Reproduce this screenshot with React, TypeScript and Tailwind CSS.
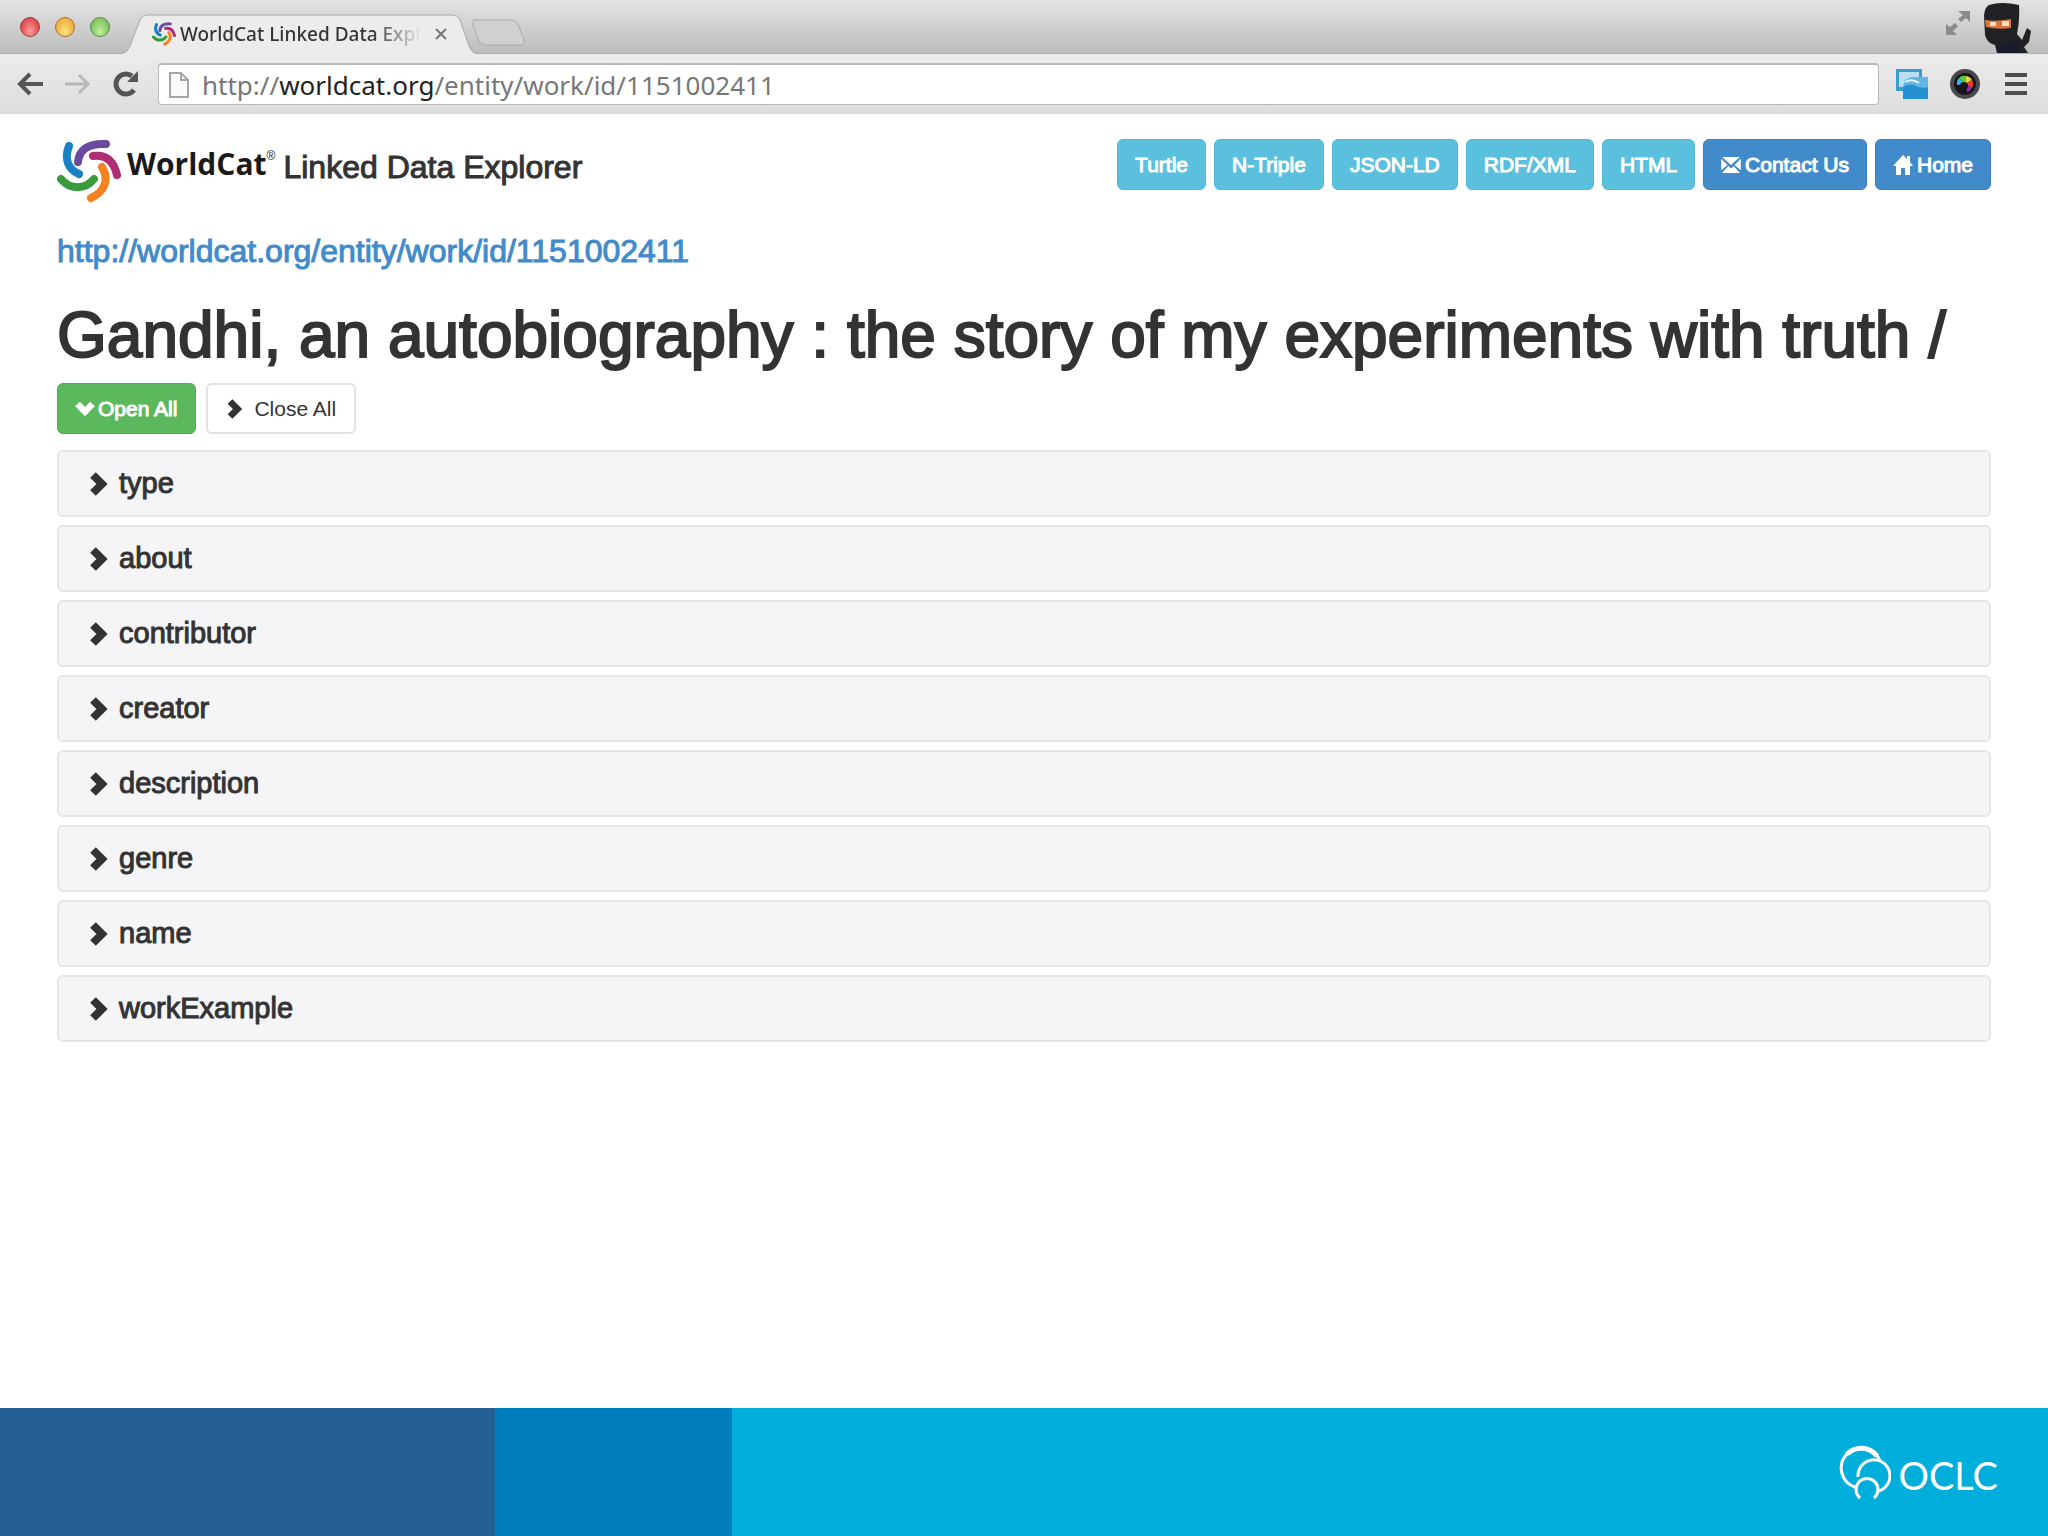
import type { ReactNode } from 'react'

const FORMATS = ['Turtle', 'N-Triple', 'JSON-LD', 'RDF/XML', 'HTML']

const PROPERTIES = [
    'type',
    'about',
    'contributor',
    'creator',
    'description',
    'genre',
    'name',
    'workExample',
]

const ENTITY_URL = 'http://worldcat.org/entity/work/id/1151002411'

function Swirl({ className }: { className: string }) {
    return (
        <svg viewBox="0 0 64 64" className={className} fill="none" strokeWidth="8" strokeLinecap="round" aria-hidden="true">
            <path d="M12 7C7 20 11 30 22 35" stroke="#1a80c4" />
            <path d="M21 23C22 11 31 4 49 5" stroke="#6a4a9f" />
            <path d="M36 17C50 15 57 23 60 36" stroke="#b02c75" />
            <path d="M45 28C53 41 47 53 34 59" stroke="#f58220" />
            <path d="M4 40C13 51 28 51 37 40" stroke="#3a9a3c" />
        </svg>
    )
}

// Glyphicon style chevron
function Chevron({ className }: { className: string }) {
    return (
        <svg viewBox="0 0 20 24" className={className} fill="none" stroke="currentColor" strokeWidth="8" aria-hidden="true">
            <path d="M4 3L13 12L4 21" />
        </svg>
    )
}

function TabStrip() {
    return (
        <div className="flex h-[54px] items-end border-b border-[#b0b0b0] bg-linear-to-b from-[#e4e4e4] to-[#bcbcbc] pl-5">
            <div className="flex h-full w-[102px] shrink-0 items-center gap-[15px]">
                <button type="button" aria-label="Close" className="size-5 rounded-full border border-[#a03c3c] bg-radial-[at_50%_75%] from-[#ff9c98] to-[#cf2b30]" />
                <button type="button" aria-label="Minimize" className="size-5 rounded-full border border-[#a8752c] bg-radial-[at_50%_75%] from-[#ffe27c] to-[#e79a2b]" />
                <button type="button" aria-label="Zoom" className="size-5 rounded-full border border-[#5a8f47] bg-radial-[at_50%_75%] from-[#c2f09c] to-[#62b048]" />
            </div>
            <div className="relative -mb-px h-10 w-[354px] shrink-0">
                <svg viewBox="0 0 354 40" className="absolute inset-0 size-full" aria-hidden="true">
                    <path d="M0 40Q6 38 8 32L18 6Q20 1 26 1H330Q336 1 338 6L347 32Q349 38 354 40" fill="#ececec" stroke="#a9a9a9" />
                </svg>
                <div className="relative flex h-full items-center pl-[30px]">
                    <Swirl className="size-6 shrink-0" />
                    <span className="ml-1 w-[246px] overflow-hidden whitespace-nowrap bg-linear-to-r from-[#333] from-78% to-transparent to-98% bg-clip-text font-['Noto_Sans',sans-serif] text-[19px] leading-6 font-medium text-transparent">
                        WorldCat Linked Data Expl
                    </span>
                    <button type="button" aria-label="Close tab" className="ml-[7px] text-[#777]">
                        <svg viewBox="0 0 16 16" className="size-4" stroke="currentColor" strokeWidth="2" aria-hidden="true">
                            <path d="M3 3L13 13M13 3L3 13" />
                        </svg>
                    </button>
                </div>
            </div>
            <button type="button" aria-label="New tab" className="-ml-1 mb-1 shrink-0">
                <svg viewBox="0 0 56 32" className="h-8 w-14" aria-hidden="true">
                    <path d="M3 3H39Q44 3 46 7L52 23Q53 28 48 28H14Q9 28 7 24L1 8Q0 3 3 3Z" fill="#d0d0d0" stroke="#aaa" />
                </svg>
            </button>
            <div className="ml-auto flex h-full shrink-0 items-end">
                <svg viewBox="0 0 26 26" className="mr-3 mb-[17px] size-[26px]" fill="#8b8b8b" aria-hidden="true">
                    <path d="M13 1H25V12L21 8L16 12L13 9L18 5ZM1 14L5 17L10 13L13 16L8 21L12 25H1Z" />
                </svg>
                <svg viewBox="0 0 48 50" className="mr-[17px] h-[50px] w-12" aria-hidden="true">
                    <path d="M6 2Q18 -2 36 2Q37 18 34 31L39 37L44 25L48 28L46 39L41 44L45 50H14L12 42Q4 40 2 32L1 12Q2 4 6 2Z" fill="#1f2124" />
                    <path d="M13 42Q22 46 32 36L38 50H15Z" fill="#171b2b" />
                    <path d="M2 17Q14 19 28 16V25Q14 27 3 24Z" fill="#d9753f" />
                    <path d="M7 19H13V23H7ZM19 18H26V23H19Z" fill="#ffd9bd" />
                </svg>
            </div>
        </div>
    )
}

function Toolbar() {
    return (
        <div className="flex h-[60px] items-center bg-linear-to-b from-[#ececec] to-[#dcdcdc] pr-[21px] pl-4 text-[#555]">
            <button type="button" aria-label="Back">
                <svg viewBox="0 0 28 28" className="size-7" fill="none" stroke="currentColor" strokeWidth="4" aria-hidden="true">
                    <path d="M27 14H4M14 4L4 14L14 24" />
                </svg>
            </button>
            <button type="button" aria-label="Forward" className="ml-5 text-[#b8b8b8]">
                <svg viewBox="0 0 28 28" className="size-7" fill="none" stroke="currentColor" strokeWidth="3" aria-hidden="true">
                    <path d="M1 14H24M15 5L24 14L15 23" />
                </svg>
            </button>
            <button type="button" aria-label="Reload" className="ml-5">
                <svg viewBox="0 0 28 28" className="size-7" fill="none" aria-hidden="true">
                    <path d="M22 20A10 10 0 1 1 20 6" stroke="currentColor" strokeWidth="5" />
                    <path d="M26 1V12H15Z" fill="currentColor" />
                </svg>
            </button>
            <div className="ml-[18px] flex h-[42px] flex-1 items-center rounded-sm border border-t-2 border-[#b9b9b9] bg-white pl-[10px]">
                <svg viewBox="0 0 20 26" className="h-[26px] w-5 shrink-0" fill="#fafafa" stroke="#a5a5a5" strokeWidth="2" aria-hidden="true">
                    <path d="M1 1H12L19 8V25H1ZM12 1V8H19" />
                </svg>
                <div
                    role="textbox"
                    aria-label="Address"
                    contentEditable
                    suppressContentEditableWarning
                    className="ml-[13px] flex-1 whitespace-nowrap font-['Noto_Sans',sans-serif] text-[26px] leading-8 text-[#777] outline-none"
                >
                    http://<span className="text-[#222]">worldcat.org</span>/entity/work/id/1151002411
                </div>
            </div>
            <button type="button" aria-label="Screens" className="ml-4">
                <svg viewBox="0 0 34 32" className="h-8 w-[34px]" aria-hidden="true">
                    <path d="M1 1H27V23H1Z" fill="#3a9bcd" />
                    <path d="M4 4H24V19H4Z" fill="#b9def0" />
                    <path d="M10 12L16 9H33V31H8V18Z" fill="#63b5e6" />
                    <path d="M8 19Q15 15 21 18T33 19V31H8Z" fill="#2490d2" />
                    <path d="M10 14Q17 10 24 15" stroke="#e5f5fc" strokeWidth="2" fill="none" />
                </svg>
            </button>
            <button type="button" aria-label="Camera" className="ml-5">
                <svg viewBox="0 0 32 32" className="size-8" aria-hidden="true">
                    <circle cx="16" cy="16" r="15" fill="#4a4a4c" />
                    <circle cx="16" cy="16" r="11" fill="#17171b" />
                    <path d="M16 16L8 17A8 8 0 0 1 10 10Z" fill="#38b6e8" />
                    <path d="M16 16L10 10A8 8 0 0 1 17 8Z" fill="#58d03e" />
                    <path d="M16 16L17 8A8 8 0 0 1 23 12Z" fill="#e9d934" />
                    <path d="M16 16L23 12A8 8 0 0 1 23 20Z" fill="#e2413a" />
                    <path d="M16 16L23 20A8 8 0 0 1 18 24Z" fill="#8a2fa8" />
                    <circle cx="15" cy="18" r="4" fill="#17171b" />
                </svg>
            </button>
            <button type="button" aria-label="Menu" className="ml-6">
                <svg viewBox="0 0 22 22" className="size-[22px]" stroke="#4d4d4d" strokeWidth="4" aria-hidden="true">
                    <path d="M0 2H22M0 11H22M0 20H22" />
                </svg>
            </button>
        </div>
    )
}

function PillLink({ tone, children }: { tone: 'info' | 'primary'; children: ReactNode }) {
    const color = tone === 'info' ? 'bg-[#5bc0de] border-[#50b9d8]' : 'bg-[#428bca] border-[#3a80bd]'
    return (
        <a
            href="#"
            className={`flex h-[51px] items-center gap-1 rounded-md border px-[17px] text-[21px] text-white [-webkit-text-stroke:1px] ${color}`}
        >
            {children}
        </a>
    )
}

function Header() {
    return (
        <header className="flex items-start justify-between">
            <div className="flex items-start">
                <Swirl className="size-16" />
                <span className="ml-[6px] font-['Open_Sans',sans-serif] text-[30px] leading-[50px] font-bold text-[#1a1a1a]">WorldCat</span>
                <span className="text-[12px] leading-[34px] text-[#1a1a1a]">®</span>
                <span className="ml-2 text-[32px] leading-[56px] [-webkit-text-stroke:1px]">Linked Data Explorer</span>
            </div>
            <nav className="flex gap-2">
                {FORMATS.map(format => (
                    <PillLink key={format} tone="info">
                        {format}
                    </PillLink>
                ))}
                <PillLink tone="primary">
                    <svg viewBox="0 0 22 18" className="h-4 w-5" aria-hidden="true">
                        <path d="M1 0H21L11 9ZM0 2L7 9L0 15ZM22 2V15L15 9ZM1 18L8 10L11 13L14 10L21 18Z" fill="white" />
                    </svg>
                    Contact Us
                </PillLink>
                <PillLink tone="primary">
                    <svg viewBox="0 0 20 20" className="size-5" aria-hidden="true">
                        <path d="M10 0L14 4V1H17V7L20 11H17V20H12V13H8V20H3V11H0Z" fill="white" />
                    </svg>
                    Home
                </PillLink>
            </nav>
        </header>
    )
}

function Footer() {
    return (
        <footer className="mt-auto flex h-32 bg-[#00aedb]">
            <div className="w-[495px] bg-[#235f92]" />
            <div className="w-[237px] bg-[#007dbc]" />
            <div className="flex flex-1 items-center justify-end gap-2 pr-[50px]">
                <svg viewBox="0 0 52 56" className="h-14 w-[52px]" fill="none" stroke="white" aria-hidden="true">
                    <path d="M16 43A20 20 0 1 1 41 17" strokeWidth="3" />
                    <path d="M8 10A20 20 0 0 1 38 12" strokeWidth="5" />
                    <path d="M19 33A16 16 0 1 1 40 47" strokeWidth="3" />
                    <path d="M21 54A11 11 0 1 1 35 54" strokeWidth="3" />
                </svg>
                <span className="pt-[6px] font-[Lato,sans-serif] text-[38px] leading-none text-white">OCLC</span>
            </div>
        </footer>
    )
}

export default function App() {
    return (
        <div className="flex min-h-screen flex-col bg-white font-['Liberation_Sans',Arial,sans-serif] text-[#333]">
            <TabStrip />
            <Toolbar />
            <main className="px-[57px] pt-[25px]">
                <Header />
                <a href="#" className="mt-7 block text-[32px] leading-10 text-[#428bca] [-webkit-text-stroke:1px]">
                    {ENTITY_URL}
                </a>
                <h1 className="mt-7 text-[64px] leading-[72px] whitespace-nowrap [-webkit-text-stroke:2px]">
                    Gandhi, an autobiography : the story of my experiments with truth /
                </h1>
                <div className="mt-3 flex gap-[10px]">
                    <button type="button" className="flex h-[51px] items-center gap-1 rounded-md border border-[#4cae4c] bg-[#5cb85c] px-[18px] text-[21px] text-white [-webkit-text-stroke:1px]">
                        <Chevron className="h-5 w-[18px] rotate-90" />
                        Open All
                    </button>
                    <button type="button" className="flex h-[51px] items-center gap-[10px] rounded-md border-2 border-[#e3e1e4] bg-white px-[18px] text-[21px]">
                        <Chevron className="h-5 w-[18px]" />
                        Close All
                    </button>
                </div>
                <ul className="mt-4 flex flex-col gap-2">
                    {PROPERTIES.map(name => (
                        <li key={name}>
                            <button type="button" className="flex h-[67px] w-full items-center gap-[10px] rounded-md border-2 border-[#e6e5e8] bg-[#f5f4f7] px-[30px] text-[29px] [-webkit-text-stroke:1px]">
                                <Chevron className="h-6 w-5" />
                                {name}
                            </button>
                        </li>
                    ))}
                </ul>
            </main>
            <Footer />
        </div>
    )
}
